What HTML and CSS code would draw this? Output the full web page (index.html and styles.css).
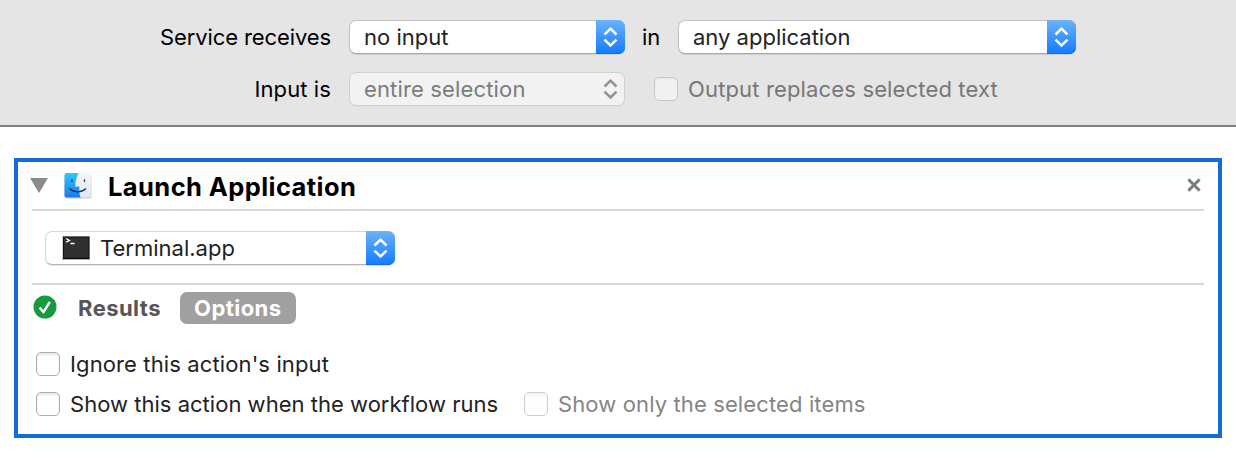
FILE: index.html
```html
<!DOCTYPE html>
<html lang="en">
<head>
<meta charset="utf-8">
<title>Launch Application</title>
<link rel="stylesheet" href="styles.css">
</head>
<body>
<svg class="defs" width="0" height="0">
  <symbol id="arrows" viewBox="0 0 29 34"><path d="M8.500 14.500 14.500 8.700 20.500 14.500M8.500 19.700 14.500 25.500 20.500 19.700" fill="none" stroke="currentColor" stroke-width="2.500"/></symbol>
</svg>
<header class="service">
  <div class="row">
    <span class="label t-service">Service receives</span>
    <div class="select select-input"><span class="value t-noinput">no input</span><svg class="stepper"><use href="#arrows"/></svg></div>
    <span class="in">in</span>
    <div class="select select-app"><span class="value t-anyapp">any application</span><svg class="stepper"><use href="#arrows"/></svg></div>
  </div>
  <div class="row">
    <span class="label t-inputis">Input is</span>
    <div class="select select-input disabled"><span class="value t-entire">entire selection</span><svg class="stepper"><use href="#arrows"/></svg></div>
    <div class="check off replaces"><i class="box"></i><span class="t-output">Output replaces selected text</span></div>
  </div>
</header>
<main class="action">
  <div class="title-bar">
    <svg class="triangle" width="18" height="15" viewBox="0 0 18 15"><path d="M0 0h18L9 15z" fill="#8b8b8b"/></svg>
    <svg class="finder" width="30" height="28" viewBox="0 0 30 28">
      <defs>
        <linearGradient id="blue" x2="0" y2="1"><stop stop-color="#2acbfb"/><stop offset="1" stop-color="#2175ef"/></linearGradient>
        <linearGradient id="pale" x2="0" y2="1"><stop stop-color="#f5f5f8"/><stop offset="1" stop-color="#dce8f5"/></linearGradient>
      </defs>
      <rect x="1.500" y="2" width="27" height="24.500" rx="2" fill="#c4c8cc"/>
      <rect x="1.500" y="1" width="27" height="24.500" rx="2" fill="url(#pale)"/>
      <path d="M3.500 1H15.300C13.300 5 12.200 10 12 14.800H16.300C16 18.500 16.300 22 17.400 25.500H3.500a2 2 0 0 1-2-2V3a2 2 0 0 1 2-2z" fill="url(#blue)"/>
      <path d="M15.300 1C13.300 5 12.200 10 12 14.800H16.300C16 18.500 16.300 22 17.400 25.500" fill="none" stroke="#4c8fd0" stroke-opacity=".4" stroke-width=".6"/>
      <path d="M9 7.300v2.800M21.500 7.300v2.800" stroke="#1b3550" stroke-width="1.200"/>
      <path d="M6.800 16.800C11.500 21 18 21 22.700 16.800" fill="none" stroke="#173351" stroke-width="1.200" stroke-linecap="round"/>
    </svg>
    <h1 class="t-title">Launch Application</h1>
    <svg class="close" width="14" height="14" viewBox="0 0 14 14"><path d="M1.400 1.400 12.600 12.600M12.600 1.400 1.400 12.600" stroke="#7d7d7d" stroke-width="2.900"/></svg>
  </div>
  <div class="choice">
    <div class="select select-terminal">
      <svg class="terminal" width="30" height="27" viewBox="0 0 30 27">
        <rect x="1" y="2" width="28" height="23" fill="#aaa"/>
        <rect x="1" y="1" width="28" height="23" fill="#d1d1d1"/>
        <rect x="2" y="1.500" width="26.500" height="22.500" fill="#111"/>
        <rect x="3" y="2.500" width="24.500" height="20" fill="#303030"/>
        <path d="M5 3.500 8.500 5.400 5 7.300M9.500 8.500h4" fill="none" stroke="#fff" stroke-width="1.300"/>
      </svg>
      <span class="value t-terminal">Terminal.app</span><svg class="stepper"><use href="#arrows"/></svg>
    </div>
  </div>
  <div class="tabs">
    <svg class="ok" width="24" height="24" viewBox="0 0 24 24"><circle cx="12" cy="12" r="11.500" fill="#159a3f"/><path d="M6.600 12.600 10.500 17 16.800 7" fill="none" stroke="#fff" stroke-width="2.400"/></svg>
    <span class="results">Results</span>
    <span class="options">Options</span>
  </div>
  <div class="check"><i class="box"></i><span class="t-ignore">Ignore this action's input</span></div>
  <div class="pair">
    <div class="check first"><i class="box"></i><span class="t-show">Show this action when the workflow runs</span></div>
    <div class="check off"><i class="box"></i><span class="t-only">Show only the selected items</span></div>
  </div>
</main>
</body>
</html>
```
FILE: styles.css
```css
* { box-sizing: border-box; }
body { margin: 0; height: 460px; overflow: hidden; background: #fff; color: #222; font: 22px/34px Inter, "Liberation Sans", sans-serif; white-space: nowrap; }
.defs { display: block; }
svg { flex: none; }
.service { height: 127px; padding-top: 20px; background: #e5e5e5; border-bottom: 2px solid #808080; display: flex; flex-direction: column; gap: 18px; }
.row { display: flex; height: 34px; }
.label { width: 331px; margin-right: 18px; text-align: right; color: #000; }
.select { display: flex; height: 34px; border: 1px solid #c3c3c3; border-bottom-color: #a9a9a9; border-radius: 7px; background: #fff; line-height: 32px; box-shadow: 0 1px 1px rgba(0,0,0,.1); }
.select-input { width: 276px; }
.select-app { width: 398px; }
.value { flex: 1; padding-left: 14px; }
.stepper { width: 29px; height: 34px; margin: -1px; color: #fff; background: linear-gradient(#6bb3fa, #127bff); border-radius: 0 7px 7px 0; box-shadow: inset 0 -1px #1068f0; }
.disabled { background: #f2f2f2; border-color: #d0d0d0; color: #7c7c7c; box-shadow: 0 1px 1px rgba(0,0,0,.03); }
.disabled .stepper { background: none; color: #929292; box-shadow: none; }
.in { width: 53px; padding-left: 17px; color: #000; }
.check { display: flex; align-items: center; height: 24px; line-height: 24px; gap: 10px; }
.replaces { height: 34px; margin-left: 29px; }
.box { width: 24px; height: 24px; flex: none; border: 1px solid #adadad; border-radius: 5px; background: #fff; box-shadow: inset 0 2px 2px #e6e6e6; }
.off { color: #858585; }
.off .box { border-color: #d0d0d0; background: #fdfdfd; box-shadow: inset 0 2px 2px #f2f2f2; }
.replaces { color: #777; }
.replaces .box { border-color: #c6c6c6; background: #f1f1f1; box-shadow: inset 0 1px 1px #e6e6e6; }
.action { width: 1208px; height: 280px; margin: 31px 14px 0; padding: 0 14px; border: 4px solid #126cd6; }
.title-bar { display: flex; align-items: center; height: 49px; border-bottom: 2px solid #d8d8d8; }
.triangle { margin-left: -2px; }
.finder { margin-left: 15px; }
h1 { flex: 1; margin: 2px 0 0 15px; color: #000; font-size: 25.5px; font-weight: 700; }
.close { margin: -1px 3px 0 0; }
.choice { height: 74px; padding: 20px 13px; border-bottom: 2px solid #d8d8d8; }
.select-terminal { width: 350px; border-color: #d5d5d5; border-bottom-color: #b5b5b5; }
.terminal { margin: 3px 0 0 15px; }
.t-terminal { padding-left: 9px; }
.t-service { letter-spacing: -.1px; }
.t-inputis { letter-spacing: .1px; }
.t-entire { letter-spacing: .15px; }
.t-output { letter-spacing: .15px; }
.t-ignore { letter-spacing: .12px; }
.t-show { letter-spacing: .02px; }
.t-only { letter-spacing: .12px; }
.t-title { letter-spacing: .42px; }
.tabs { display: flex; align-items: center; height: 32px; margin: 7px 0 28px 1px; font-weight: 700; line-height: 32px; letter-spacing: .45px; }
.ok { margin-top: -2px; }
.results { width: 102px; margin-left: 21px; color: #565656; }
.options { width: 116px; padding-left: 14px; border-radius: 7px; background: #a0a0a0; color: #fff; }
.action .check { margin-left: 4px; }
.pair { display: flex; margin-top: 16px; }
.pair .first { width: 484px; }
```
